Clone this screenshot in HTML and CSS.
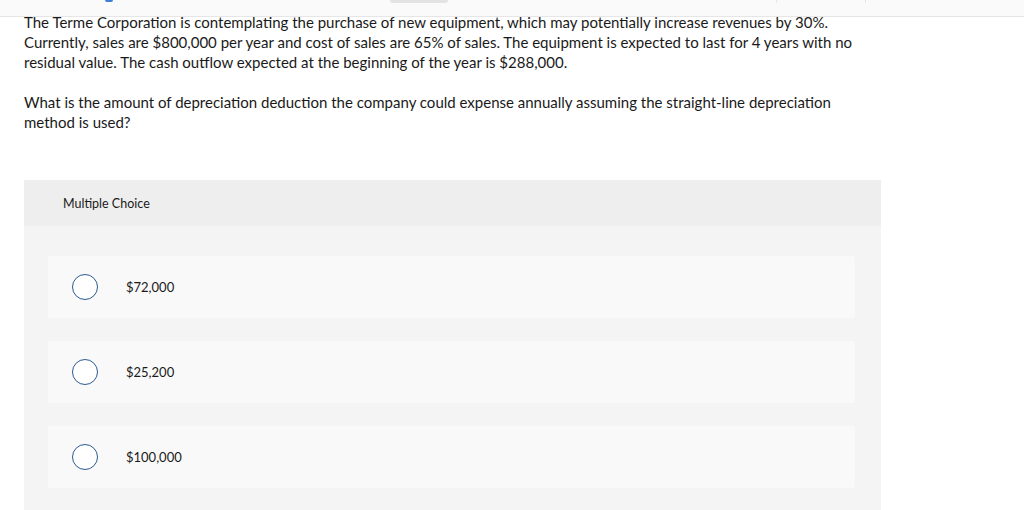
FILE: index.html
```html
<!DOCTYPE html>
<html>
<head>
<meta charset="utf-8">
<link rel="stylesheet" href="styles.css">
</head>
<body>
<div class="topbar">
  <span class="top-blue"></span>
  <span class="top-pill"></span>
  <span class="top-line l1"></span>
  <span class="top-line l2"></span>
</div>
<div class="content">
  <p class="q">The Terme Corporation is contemplating the purchase of new equipment, which may potentially increase revenues by 30%. Currently, sales are $800,000 per year and cost of sales are 65% of sales. The equipment is expected to last for 4 years with no residual value. The cash outflow expected at the beginning of the year is $288,000.</p>
  <p class="q q2">What is the amount of depreciation deduction the company could expense annually assuming the straight-line depreciation method is used?</p>
  <div class="mc">
    <div class="mc-head">Multiple Choice</div>
    <div class="mc-body">
      <div class="opt"><span class="radio"></span><span class="label">$72,000</span></div>
      <div class="opt"><span class="radio"></span><span class="label">$25,200</span></div>
      <div class="opt"><span class="radio"></span><span class="label">$100,000</span></div>
    </div>
  </div>
</div>
</body>
</html>
```
FILE: styles.css
```css
html, body {
  margin: 0;
  padding: 0;
  background: #ffffff;
}
body {
  font-family: Lato, "Open Sans", sans-serif;
  color: #1a1a1a;
  width: 1024px;
  height: 510px;
  overflow: hidden;
}
.topbar {
  position: relative;
  z-index: 1;
  height: 16px;
  background: #fafafa;
  border-bottom: 1px solid #e6e6e6;
}
.top-blue {
  position: absolute;
  left: 105px;
  top: 0;
  width: 8px;
  height: 2px;
  background: #3d7fd6;
  border-radius: 0 0 2px 2px;
}
.top-pill {
  position: absolute;
  left: 390px;
  top: 0;
  width: 58px;
  height: 3px;
  background: #e3e3e3;
  border-radius: 0 0 4px 4px;
}
.top-line {
  position: absolute;
  top: 0;
  width: 1px;
  height: 3px;
  background: #e6e6e6;
}
.l1 { left: 776px; }
.l2 { left: 865px; }
.content {
  padding: 0 24px;
  margin-top: -5px;
}
.q {
  margin: 0;
  font-size: 15px;
  line-height: 20px;
  width: 840px;
}
.q2 {
  margin-top: 20px;
  width: 812px;
}
.mc {
  margin-top: 48px;
  width: 857px;
  background: #f4f4f4;
}
.mc-head {
  height: 46px;
  display: flex;
  align-items: center;
  padding-left: 39px;
  background: #eeeeee;
  font-size: 12.5px;
}
.mc-body {
  padding: 30px 26px 40px 24px;
  display: flex;
  flex-direction: column;
  gap: 23px;
}
.opt {
  height: 62px;
  background: #f9f9f9;
  border-radius: 3px;
  display: flex;
  align-items: center;
  padding-left: 24px;
}
.radio {
  width: 24px;
  height: 24px;
  border: 1px solid #2b5a92;
  border-radius: 50%;
  background: #ffffff;
  box-sizing: content-box;
}
.label {
  margin-left: 28px;
  font-size: 13px;
}
```
